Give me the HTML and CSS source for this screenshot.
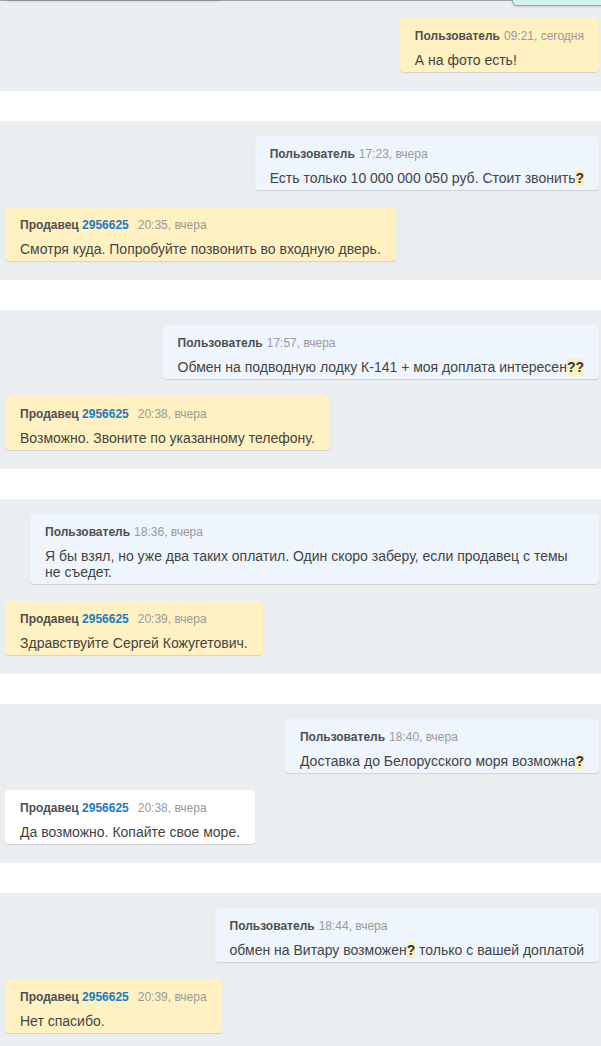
FILE: index.html
```html
<!DOCTYPE html>
<html lang="ru">
<head>
<meta charset="utf-8">
<title>Переписка</title>
<link rel="stylesheet" href="styles.css">
</head>
<body>
<div class="thread">
  <div class="top-edge">
    <div class="top-line"></div>
    <div class="top-shadow"></div>
    <div class="top-tab"></div>
  </div>

  <section class="group first">
    <div class="msg out yellow">
      <div class="meta"><span class="name">Пользователь</span><span class="time">09:21, сегодня</span></div>
      <div class="text">А на фото есть!</div>
    </div>
  </section>

  <section class="group">
    <div class="msg out">
      <div class="meta"><span class="name">Пользователь</span><span class="time">17:23, вчера</span></div>
      <div class="text">Есть только 10 000 000 050 руб. Стоит звонить<b class="q">?</b></div>
    </div>
    <div class="msg in yellow">
      <div class="meta"><span class="name">Продавец <span class="id">2956625</span></span><span class="time wide">20:35, вчера</span></div>
      <div class="text">Смотря куда. Попробуйте позвонить во входную дверь.</div>
    </div>
  </section>

  <section class="group">
    <div class="msg out">
      <div class="meta"><span class="name">Пользователь</span><span class="time">17:57, вчера</span></div>
      <div class="text">Обмен на подводную лодку К-141 + моя доплата интересен<b class="q">??</b></div>
    </div>
    <div class="msg in yellow">
      <div class="meta"><span class="name">Продавец <span class="id">2956625</span></span><span class="time wide">20:38, вчера</span></div>
      <div class="text">Возможно. Звоните по указанному телефону.</div>
    </div>
  </section>

  <section class="group">
    <div class="msg out">
      <div class="meta"><span class="name">Пользователь</span><span class="time">18:36, вчера</span></div>
      <div class="text">Я бы взял, но уже два таких оплатил. Один скоро заберу, если продавец с темы не съедет.</div>
    </div>
    <div class="msg in yellow">
      <div class="meta"><span class="name">Продавец <span class="id">2956625</span></span><span class="time wide">20:39, вчера</span></div>
      <div class="text">Здравствуйте Сергей Кожугетович.</div>
    </div>
  </section>

  <section class="group">
    <div class="msg out">
      <div class="meta"><span class="name">Пользователь</span><span class="time">18:40, вчера</span></div>
      <div class="text">Доставка до Белорусского моря возможна<b class="q">?</b></div>
    </div>
    <div class="msg in white">
      <div class="meta"><span class="name">Продавец <span class="id">2956625</span></span><span class="time wide">20:38, вчера</span></div>
      <div class="text">Да возможно. Копайте свое море.</div>
    </div>
  </section>

  <section class="group">
    <div class="msg out">
      <div class="meta"><span class="name">Пользователь</span><span class="time">18:44, вчера</span></div>
      <div class="text">обмен на Витару возможен<b class="q">?</b> только с вашей доплатой</div>
    </div>
    <div class="msg in yellow">
      <div class="meta"><span class="name">Продавец <span class="id">2956625</span></span><span class="time wide">20:39, вчера</span></div>
      <div class="text">Нет спасибо.</div>
    </div>
  </section>
</div>
</body>
</html>
```

FILE: styles.css
```css
html, body {
  margin: 0;
  padding: 0;
  background: #ffffff;
}

body {
  font-family: "Liberation Sans", Arial, sans-serif;
  color: #444;
}

.thread {
  position: relative;
  width: 601px;
  height: 1046px;
  overflow: hidden;
}

.top-edge {
  position: absolute;
  left: 0;
  top: 0;
  width: 601px;
  height: 6px;
  z-index: 2;
}

.top-line {
  position: absolute;
  left: 0;
  top: 0;
  width: 514px;
  height: 1px;
  background: #a3a3a3;
}

.top-shadow {
  position: absolute;
  left: 6px;
  top: -4px;
  width: 216px;
  height: 4px;
  border-radius: 0 0 4px 4px;
  box-shadow: 0 1px 3px rgba(0, 0, 0, 0.18);
}

.top-tab {
  position: absolute;
  left: 512px;
  top: -4px;
  width: 100px;
  height: 8px;
  background: #d6f1f2;
  border: 1px solid #9aa3a5;
  border-radius: 0 0 0 5px;
  box-shadow: 0 1px 2px rgba(0, 0, 0, 0.15);
}

.group {
  display: flex;
  flex-direction: column;
  gap: 17px;
  background: #ebeef0;
  padding: 15px 2px 19px 5px;
  margin-bottom: 30px;
}

.group.first {
  padding-top: 18px;
}

.msg {
  box-sizing: border-box;
  max-width: calc(100% - 25px);
  padding: 10px 15px 4px;
  border-radius: 4px;
  background: #eef5fd;
  box-shadow: 0 1px 1px rgba(0, 0, 0, 0.12);
}

.msg.out {
  align-self: flex-end;
}

.msg.in {
  align-self: flex-start;
}

.msg.yellow {
  background: #fff1c1;
}

.msg.white {
  background: #ffffff;
}

.meta {
  font-size: 12px;
  line-height: 16px;
  white-space: nowrap;
}

.name {
  font-weight: bold;
  color: #4f4f4f;
}

.id {
  color: #1c7bc4;
}

.time {
  color: #9a9a9a;
  margin-left: 4px;
}

.time.wide {
  margin-left: 9px;
}

.text {
  margin-top: 8px;
  font-size: 14px;
  line-height: 16px;
  color: #444;
}

.q {
  font-weight: bold;
  color: #333;
  background: #fdefbd;
}
```
